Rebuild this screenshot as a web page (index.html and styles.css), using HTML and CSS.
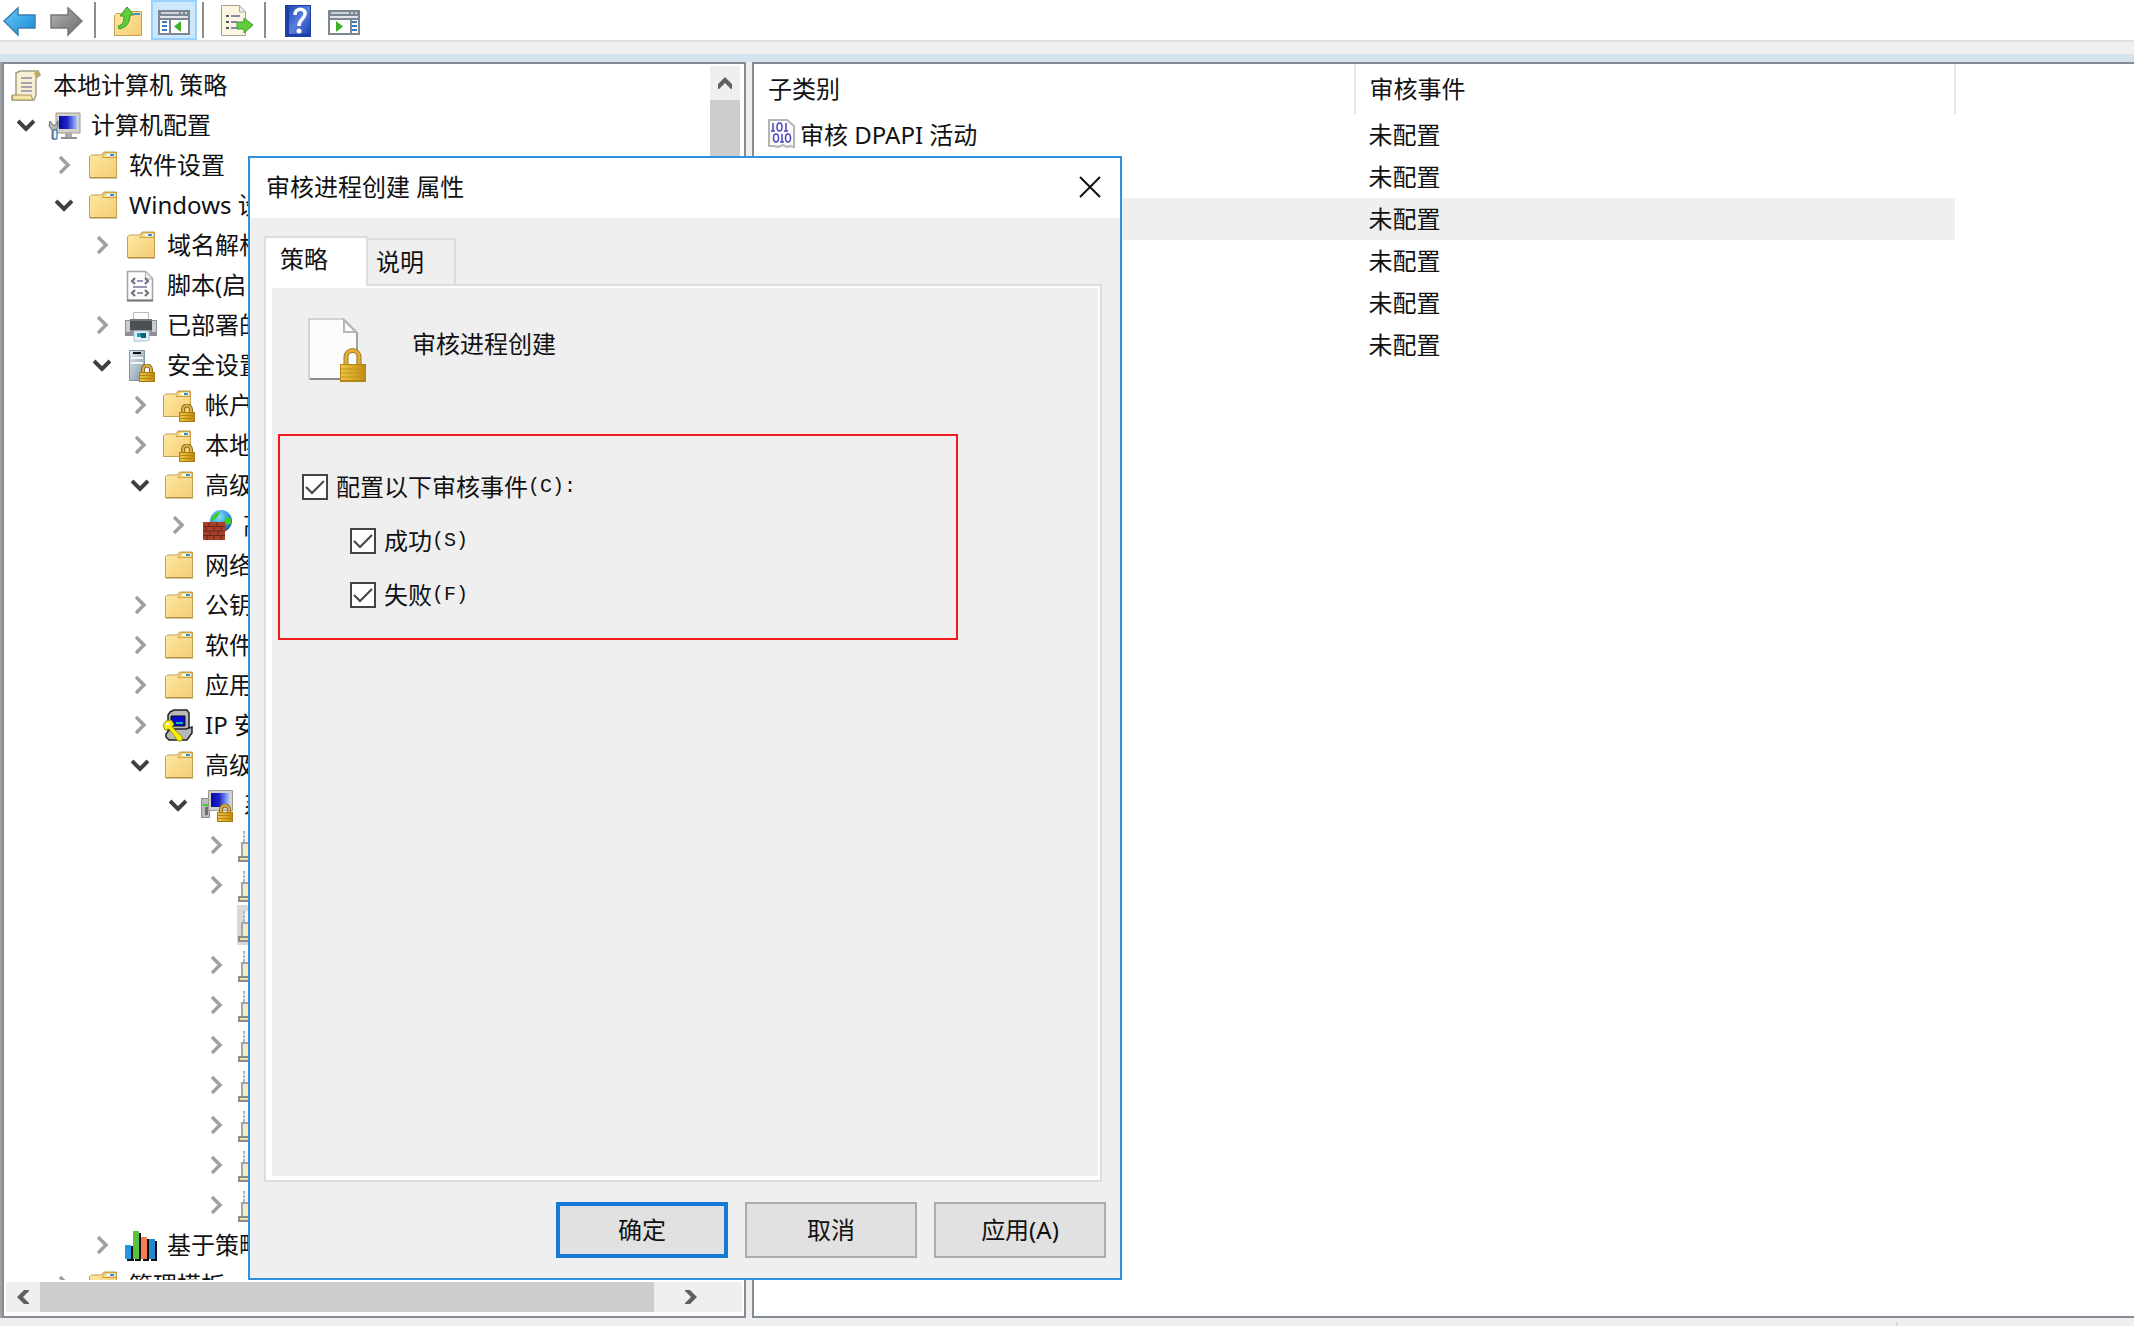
FILE: index.html
```html
<!DOCTYPE html>
<html lang="zh-CN">
<head>
<meta charset="utf-8">
<title>本地计算机 策略</title>
<link rel="stylesheet" href="styles.css">
</head>
<body>
<svg class="defs" aria-hidden="true">
  <defs>
    <linearGradient id="gFolder" x1="0" y1="0" x2="1" y2="1"><stop offset="0" stop-color="#ffeaa6"/><stop offset="1" stop-color="#f3cc72"/></linearGradient>
    <linearGradient id="gBlue" x1="0" y1="0" x2="1" y2="1"><stop offset="0" stop-color="#6ccbf8"/><stop offset="1" stop-color="#1489d6"/></linearGradient>
    <linearGradient id="gGray" x1="0" y1="0" x2="1" y2="1"><stop offset="0" stop-color="#b5b5b5"/><stop offset="1" stop-color="#6a6a6a"/></linearGradient>
    <linearGradient id="gScreen" x1="0" y1="0" x2="1" y2="0"><stop offset="0" stop-color="#0a0aa0"/><stop offset=".45" stop-color="#1c22c8"/><stop offset="1" stop-color="#a8c4ff"/></linearGradient>
    <linearGradient id="gHelp" x1="0" y1="0" x2="1" y2="1"><stop offset="0" stop-color="#2349b8"/><stop offset=".5" stop-color="#5a80e0"/><stop offset="1" stop-color="#1d3fae"/></linearGradient>
    <linearGradient id="gLock" x1="0" y1="0" x2="1" y2="0"><stop offset="0" stop-color="#f0c545"/><stop offset="1" stop-color="#c08d12"/></linearGradient>
    <linearGradient id="gServer" x1="0" y1="0" x2="1" y2="1"><stop offset="0" stop-color="#dfe8ee"/><stop offset="1" stop-color="#7f95a3"/></linearGradient>
    <radialGradient id="gGlobe" cx=".4" cy=".3" r=".8"><stop offset="0" stop-color="#8ce4ff"/><stop offset=".6" stop-color="#2b8fe0"/><stop offset="1" stop-color="#1b3f9a"/></radialGradient>
    <symbol id="right" viewBox="0 0 18 18"><path d="M5 1l8 8-8 8" fill="none" stroke="#a0a0a0" stroke-width="3.500"/></symbol>
    <symbol id="down" viewBox="0 0 18 18"><path d="M1 5l8 8 8-8" fill="none" stroke="#404040" stroke-width="4"/></symbol>
    <symbol id="lock" viewBox="0 0 16 18"><path d="M4 9V5.500a4 4 0 0 1 8 0V9" fill="none" stroke="#8a6a1e" stroke-width="4"/><path d="M4 9V5.500a4 4 0 0 1 8 0V9" fill="none" stroke="#d9b24a" stroke-width="2"/><rect y="8" width="16" height="10" fill="#a87a10"/><rect x="1" y="9" width="14" height="8" fill="url(#gLock)"/><path d="M1 11.500h14M1 14.500h14" stroke="#b5850f"/></symbol>
    <symbol id="folder" viewBox="0 0 34 34"><path d="M4.500 29.500V9l2-2H16l3-3h12.500v25.500z" fill="url(#gFolder)" stroke="#c39f52"/><path d="M17 9.500l3-5h11v5z" fill="#f6dd9b" stroke="#c9a14a"/><rect x="22" y="6" width="8" height="2" fill="#fff"/><rect x="25" y="6" width="4" height="2" fill="#2f8fdd"/><path d="M5 30h27" stroke="#a8823a"/></symbol>
    <symbol id="folderlock" viewBox="0 0 34 34"><path d="M2.500 28.500V8l2-2H14l3-3h12.500v25.500z" fill="url(#gFolder)" stroke="#c39f52"/><path d="M15 8.500l3-5h11v5z" fill="#f6dd9b" stroke="#c9a14a"/><rect x="20" y="5" width="8" height="2" fill="#fff"/><rect x="23" y="5" width="4" height="2" fill="#2f8fdd"/><use href="#lock" x="18" y="16" width="16" height="18"/></symbol>
    <symbol id="scroll" viewBox="0 0 34 34"><path d="M7 5l4-2h18l2 4-4 3v17l-2 5H3v-4l4-1z" fill="#f7f0d3" stroke="#a39c88" stroke-width="1.500"/><path d="M25 5l4-2 2 4-4 3z" fill="#c5a867"/><path d="M3 27h19l2 5H4z" fill="#f5e3a0" stroke="#a39567"/><path d="M12 10h11M12 15h11M12 19h11M12 23h11" stroke="#8d89a5" stroke-width="1.500"/></symbol>
    <symbol id="computer" viewBox="0 0 34 34"><path d="M9 5h24v20H9z" fill="#d3d0c8" stroke="#9c9a94"/><path d="M12 8h18v13H12z" fill="url(#gScreen)"/><path d="M18 25h7v4h-7z" fill="#aaa"/><path d="M14 29h16v2H14z" fill="#8e8e8e"/><path d="M3 13l3 4h3l2-4v6l-2 3v9H5v-9l-3-4z" fill="#b5b8bb" stroke="#707477"/><path d="M6 22h4v9H6z" fill="#e6f2ff" stroke="#23599a"/></symbol>
    <symbol id="script" viewBox="0 0 34 34"><path d="M4.500 3.500h18l7 7v22h-25z" fill="#fbfbfb" stroke="#a5a5a5" stroke-width="1.500"/><path d="M22.500 4v7h7" fill="#eee" stroke="#aaa"/><path d="M4 32.500h26" stroke="#777" stroke-width="2"/><path d="M12 10l-3 3 3 3M22 10l3 3-3 3M12 22l-3 3 3 3M22 22l3 3-3 3" fill="none" stroke="#6b6b78" stroke-width="2"/><path d="M14 13h6M14 25h6M10 19h14" stroke="#9a94b5" stroke-width="2"/></symbol>
    <symbol id="printer" viewBox="0 0 34 34"><path d="M10.500 4.500h15v8h-15z" fill="#fafafa" stroke="#bbb"/><rect x="2" y="12" width="32" height="16" fill="#8d9095"/><rect x="3" y="13" width="4" height="11" fill="#c9ccd0"/><rect x="29" y="13" width="4" height="11" fill="#c9ccd0"/><rect x="7" y="11" width="22" height="11" fill="#4d5053"/><path d="M7 12h22" stroke="#777" stroke-width="2"/><path d="M11 23h15v9l-2 1H11z" fill="#e8f3fb" stroke="#9dc0d8"/><path d="M14 25h4v4h-4z" fill="#18a0b0"/><path d="M18 25h5v5h-5z" fill="#145c78"/></symbol>
    <symbol id="server" viewBox="0 0 34 34"><path d="M6.500 2.500h15v30h-15z" fill="url(#gServer)" stroke="#8397a4"/><path d="M10 5h8" stroke="#111" stroke-width="2"/><path d="M8 10h12M8 15h12" stroke="#f2f6f9" stroke-width="2"/><use href="#lock" x="16" y="16" width="16" height="18"/></symbol>
    <symbol id="firewall" viewBox="0 0 34 34"><circle cx="22" cy="13" r="11" fill="url(#gGlobe)"/><path d="M13 9l4-4 4-1-2 5-3 2-3 3zM27 8l5 3v5l-4 1-3-4z" fill="#3ecb2d"/><path d="M4 14h22v18H4z" fill="#a83f2a"/><path d="M4 18.500h22M4 23h22M4 27.500h22M10 14v4M18 14v4M7 19v4M15 19v4M22 19v4M11 23v4M19 23v4M8 28v4M15 28v4M22 28v4" stroke="#6d2518"/></symbol>
    <symbol id="ipsec" viewBox="0 0 34 34"><path d="M9 4l4-2h13l2 3v16l-4 4H7V7z" fill="#b8b8b8" stroke="#222" stroke-width="1.500"/><path d="M10 8h14v10H10z" fill="#0a0ad0" stroke="#111"/><path d="M15 15h7" stroke="#17b7a4" stroke-width="2"/><path d="M5 26l4-5h16l6-2v6l-5 7H8l-3-3z" fill="#b8b8b8" stroke="#222" stroke-width="1.500"/><path d="M2 17l3-4 5-1 3 4-2 3 11 11-2 3h-3L8 21l-4 1z" fill="#f8f000" stroke="#9c9600"/><path d="M5 16h3" stroke="#fff" stroke-width="2"/></symbol>
    <symbol id="system" viewBox="0 0 34 34"><path d="M2.500 10.500h8v19h-8z" fill="#b9bcbf" stroke="#8b8e91"/><path d="M4 16h6v2H4z" fill="#37d622"/><path d="M6 19h3v8H6z" fill="#6b6e71"/><path d="M9.500 2.500h24v20h-24z" fill="#d3d0c8" stroke="#9c9a94"/><path d="M12 5h18v14H12z" fill="url(#gScreen)"/><use href="#lock" x="18" y="16" width="16" height="18"/></symbol>
    <symbol id="policy" viewBox="0 0 34 34"><path d="M7 3h18v12H7z" fill="#f6f6f6"/><path d="M7 3v12" stroke="#b5b5b5" stroke-width="2" stroke-dasharray="3 1"/><path d="M5 15h22v14H5z" fill="#f9eac0" stroke="#a5a5a5" stroke-width="2"/><path d="M2 29h24v4H2z" fill="#f3dfa4" stroke="#8c8c8c" stroke-width="2"/></symbol>
    <symbol id="chart" viewBox="0 0 34 34"><path d="M8 18h3v15H4v-2zM16 5h2v28h-6v-2h4zM24 11h2v22h-6v-2h4zM31 13h3v20h-6v-2h3z" fill="#111"/><path d="M2 17h6v14H2z" fill="#2596e4"/><path d="M10 3h6v28h-6z" fill="#59c23f"/><path d="M18 9h6v22h-6z" fill="#f67c55"/><path d="M26 11h6v20h-6z" fill="#2088cf"/></symbol>
    <symbol id="back" viewBox="0 0 34 34"><path d="M1 17L15 4v7h17v13H15v7z" fill="url(#gBlue)" stroke="#3b7fae" stroke-width="1.500"/></symbol>
    <symbol id="forward" viewBox="0 0 34 34"><path d="M33 17L19 4v7H2v13h17v7z" fill="url(#gGray)" stroke="#777" stroke-width="1.500"/></symbol>
    <symbol id="up" viewBox="0 0 34 34"><path d="M3.500 31.500V11.500l2-2H17l3-2h10.500v24z" fill="url(#gFolder)" stroke="#c39f52"/><rect x="23" y="9" width="6" height="2" fill="#2f8fdd"/><path d="M7 22c5-1 6-4 6-10H9l7-9 7 8h-4c0 8-4 13-11 14z" fill="#5fce3c" stroke="#35962a"/></symbol>
    <symbol id="treeview" viewBox="0 0 34 34"><path d="M1 6h32v25H1z" fill="#7d8692"/><path d="M3 12h28v2H3z" fill="#dfe4ea"/><path d="M3 16h9v13H3zM14 16h17v13H14z" fill="#fff"/><path d="M4 8h18v2H4zM24 8h2v2h-2zM28 8h2v2h-2z" fill="#c9d4df"/><path d="M5 18h5M5 22h5M5 26h5" stroke="#3a78c0" stroke-width="2"/><path d="M24 17v11l-7-5.500z" fill="#3fae2a"/></symbol>
    <symbol id="paneview" viewBox="0 0 34 34"><path d="M1 6h32v25H1z" fill="#7d8692"/><path d="M3 12h28v2H3z" fill="#dfe4ea"/><path d="M3 16h20v13H3zM25 16h6v13h-6z" fill="#fff"/><path d="M4 8h18v2H4zM24 8h2v2h-2zM28 8h2v2h-2z" fill="#c9d4df"/><path d="M25 18h5M25 22h5M25 26h5" stroke="#3a78c0" stroke-width="2"/><path d="M9 17v11l7-5.500z" fill="#3fae2a"/></symbol>
    <symbol id="export" viewBox="0 0 34 34"><path d="M2.500 1.500h18l6 6v24h-24z" fill="#fbf6e2" stroke="#a5a094"/><path d="M20.500 2v6h6" fill="#eee" stroke="#aaa"/><path d="M7 12h3M7 18h3M7 24h3" stroke="#555" stroke-width="2"/><path d="M12 12h9M12 18h6M12 24h6" stroke="#8b86a8" stroke-width="2"/><path d="M18 18h7v-4l9 7-9 8v-4h-7z" fill="#62cc3f" stroke="#3c9e2c"/></symbol>
    <symbol id="help" viewBox="0 0 34 34"><path d="M4 1h26v32H4z" fill="#1c3fa5"/><path d="M8 2h21v28H8z" fill="url(#gHelp)"/><path d="M14 11c0-8 11-7 10-1 0 5-6 5-6 12" fill="none" stroke="#fff" stroke-width="3.500"/><circle cx="18" cy="27" r="2.500" fill="#fff"/></symbol>
    <symbol id="binary" viewBox="0 0 28 30"><path d="M1 1h18l7 6v21l-4-1-3 1-4-2-5 2-4-1H1z" fill="#fbfbfb" stroke="#b5b5b5" stroke-width="2"/><g fill="none" stroke="#4a44c0" stroke-width="1.500"><path d="M5 4v8M3 12h4M18 4v8M16 12h4M14 15v8M12 23h4"/><ellipse cx="11.500" cy="8" rx="2.500" ry="4"/><ellipse cx="8" cy="19" rx="2.500" ry="4"/><ellipse cx="20" cy="19" rx="2.500" ry="4"/></g></symbol>
    <symbol id="doclock" viewBox="0 0 58 64"><path d="M1 1h34l14 14v46H1z" fill="#fcfcfc" stroke="#d2d2d2" stroke-width="2"/><path d="M35 1l14 14v20" fill="none" stroke="#a3a3a3" stroke-width="2"/><path d="M36 2v12h12z" fill="#fff" stroke="#b5b5b5" stroke-width="2"/><path d="M2 61h32" stroke="#8c8c8c" stroke-width="2"/><path d="M38 46V39a6 6 0 0 1 13 0v7" fill="none" stroke="#9a7a3c" stroke-width="5"/><path d="M38 46V39a6 6 0 0 1 13 0v7" fill="none" stroke="#e3ad2d" stroke-width="3"/><path d="M32 46h26v18H32z" fill="#b38418"/><path d="M33 47h24v15H33z" fill="url(#gLock)"/><path d="M33 51h24M33 55h24M33 59h24" stroke="#c2931c"/></symbol>
  </defs>
</svg>

<div class="toolbar" role="toolbar" aria-label="工具栏">
  <button class="tool" aria-label="后退"><svg><use href="#back"/></svg></button>
  <button class="tool" aria-label="前进"><svg><use href="#forward"/></svg></button>
  <span class="sep"></span>
  <button class="tool" aria-label="上一级"><svg><use href="#up"/></svg></button>
  <button class="tool on" aria-label="显示控制台树" aria-pressed="true"><svg><use href="#treeview"/></svg></button>
  <span class="sep"></span>
  <button class="tool" aria-label="导出列表"><svg><use href="#export"/></svg></button>
  <span class="sep"></span>
  <button class="tool" aria-label="帮助"><svg><use href="#help"/></svg></button>
  <button class="tool" aria-label="操作窗格"><svg><use href="#paneview"/></svg></button>
</div>

<main class="console">
  <section class="panel nav">
    <div class="nav-top">
      <ul class="tree">
        <li class="d0"><svg class="ico"><use href="#scroll"/></svg>本地计算机 策略</li>
        <li class="d1"><i class="tw"><svg><use href="#down"/></svg></i><svg class="ico"><use href="#computer"/></svg>计算机配置</li>
        <li class="d2"><i class="tw"><svg><use href="#right"/></svg></i><svg class="ico"><use href="#folder"/></svg>软件设置</li>
        <li class="d2"><i class="tw"><svg><use href="#down"/></svg></i><svg class="ico"><use href="#folder"/></svg>Windows 设</li>
        <li class="d3"><i class="tw"><svg><use href="#right"/></svg></i><svg class="ico"><use href="#folder"/></svg>域名解析</li>
        <li class="d3"><i class="tw"></i><svg class="ico"><use href="#script"/></svg>脚本(启</li>
        <li class="d3"><i class="tw"><svg><use href="#right"/></svg></i><svg class="ico"><use href="#printer"/></svg>已部署的</li>
        <li class="d3"><i class="tw"><svg><use href="#down"/></svg></i><svg class="ico"><use href="#server"/></svg>安全设置</li>
        <li class="d4"><i class="tw"><svg><use href="#right"/></svg></i><svg class="ico"><use href="#folderlock"/></svg>帐户</li>
        <li class="d4"><i class="tw"><svg><use href="#right"/></svg></i><svg class="ico"><use href="#folderlock"/></svg>本地</li>
        <li class="d4"><i class="tw"><svg><use href="#down"/></svg></i><svg class="ico"><use href="#folder"/></svg>高级</li>
        <li class="d5"><i class="tw"><svg><use href="#right"/></svg></i><svg class="ico"><use href="#firewall"/></svg>高</li>
        <li class="d4"><i class="tw"></i><svg class="ico"><use href="#folder"/></svg>网络</li>
        <li class="d4"><i class="tw"><svg><use href="#right"/></svg></i><svg class="ico"><use href="#folder"/></svg>公钥</li>
        <li class="d4"><i class="tw"><svg><use href="#right"/></svg></i><svg class="ico"><use href="#folder"/></svg>软件</li>
        <li class="d4"><i class="tw"><svg><use href="#right"/></svg></i><svg class="ico"><use href="#folder"/></svg>应用</li>
        <li class="d4"><i class="tw"><svg><use href="#right"/></svg></i><svg class="ico"><use href="#ipsec"/></svg>IP 安</li>
        <li class="d4"><i class="tw"><svg><use href="#down"/></svg></i><svg class="ico"><use href="#folder"/></svg>高级</li>
        <li class="d5"><i class="tw"><svg><use href="#down"/></svg></i><svg class="ico"><use href="#system"/></svg>系</li>
        <li class="d6"><i class="tw"><svg><use href="#right"/></svg></i><svg class="ico"><use href="#policy"/></svg></li>
        <li class="d6"><i class="tw"><svg><use href="#right"/></svg></i><svg class="ico"><use href="#policy"/></svg></li>
        <li class="d6"><i class="tw"></i><span class="sel"><svg class="ico"><use href="#policy"/></svg></span></li>
        <li class="d6"><i class="tw"><svg><use href="#right"/></svg></i><svg class="ico"><use href="#policy"/></svg></li>
        <li class="d6"><i class="tw"><svg><use href="#right"/></svg></i><svg class="ico"><use href="#policy"/></svg></li>
        <li class="d6"><i class="tw"><svg><use href="#right"/></svg></i><svg class="ico"><use href="#policy"/></svg></li>
        <li class="d6"><i class="tw"><svg><use href="#right"/></svg></i><svg class="ico"><use href="#policy"/></svg></li>
        <li class="d6"><i class="tw"><svg><use href="#right"/></svg></i><svg class="ico"><use href="#policy"/></svg></li>
        <li class="d6"><i class="tw"><svg><use href="#right"/></svg></i><svg class="ico"><use href="#policy"/></svg></li>
        <li class="d6"><i class="tw"><svg><use href="#right"/></svg></i><svg class="ico"><use href="#policy"/></svg></li>
        <li class="d3"><i class="tw"><svg><use href="#right"/></svg></i><svg class="ico"><use href="#chart"/></svg>基于策略</li>
        <li class="d2"><i class="tw"><svg><use href="#right"/></svg></i><svg class="ico"><use href="#folder"/></svg>管理模板</li>
      </ul>
      <div class="vbar">
        <button class="arrow" aria-label="向上滚动"><svg viewBox="0 0 16 16"><path d="M1 14V9l7-7 7 7v5h-1L8 8l-6 6z" fill="#606060"/></svg></button>
        <div class="thumb"></div>
      </div>
    </div>
    <div class="hbar">
      <button class="arrow" aria-label="向左滚动"><svg viewBox="0 0 16 16"><path d="M14 1H9L2 8l7 7h5v-1L8 8l6-6z" fill="#606060"/></svg></button>
      <div class="thumb"></div>
      <button class="arrow end" aria-label="向右滚动"><svg viewBox="0 0 16 16"><path d="M2 1h5l7 7-7 7H2v-1l6-6-6-6z" fill="#606060"/></svg></button>
    </div>
  </section>

  <section class="panel list">
    <table>
      <colgroup><col class="c1"><col class="c2"></colgroup>
      <thead><tr><th scope="col">子类别</th><th scope="col">审核事件</th></tr></thead>
      <tbody>
        <tr><td><span class="cell"><svg><use href="#binary"/></svg>审核 DPAPI 活动</span></td><td>未配置</td></tr>
        <tr><td></td><td>未配置</td></tr>
        <tr class="hot"><td></td><td>未配置</td></tr>
        <tr><td></td><td>未配置</td></tr>
        <tr><td></td><td>未配置</td></tr>
        <tr><td></td><td>未配置</td></tr>
      </tbody>
    </table>
  </section>
</main>
<footer class="status"><span></span></footer>

<div class="dialog" role="dialog" aria-labelledby="dlg-title">
  <header class="titlebar">
    <h1 id="dlg-title">审核进程创建 属性</h1>
    <button class="close" aria-label="关闭"><svg viewBox="0 0 22 22"><path d="M1 1l20 20M21 1L1 21" stroke="#111" stroke-width="2"/></svg></button>
  </header>
  <div class="tabs" role="tablist">
    <button class="tab active" role="tab" aria-selected="true">策略</button>
    <button class="tab" role="tab" aria-selected="false">说明</button>
  </div>
  <div class="sheet" role="tabpanel">
    <div class="subject">
      <svg><use href="#doclock"/></svg>
      <h2>审核进程创建</h2>
    </div>
    <div class="options">
      <label><input type="checkbox" checked>配置以下审核事件<span class="key">(C):</span></label>
      <label class="sub"><input type="checkbox" checked>成功<span class="key">(S)</span></label>
      <label class="sub"><input type="checkbox" checked>失败<span class="key">(F)</span></label>
    </div>
  </div>
  <div class="actions">
    <button class="btn primary">确定</button>
    <button class="btn">取消</button>
    <button class="btn">应用(A)</button>
  </div>
</div>
</body>
</html>
```
FILE: styles.css
```css
* { box-sizing: border-box; }

body {
  margin: 0;
  height: 100vh;
  display: flex;
  flex-direction: column;
  overflow: hidden;
  background: #efefef;
  color: #111;
  font: 24px/40px "Noto Sans", "Noto Sans CJK SC", sans-serif;
}

button {
  padding: 0;
  border: 0;
  background: none;
  color: inherit;
  font: inherit;
}

svg { display: block; flex: none; }
.defs { position: absolute; width: 0; height: 0; }

/* Toolbar */
.toolbar {
  display: flex;
  align-items: center;
  flex: none;
  height: 42px;
  padding-left: 3px;
  border-bottom: 2px solid #dedede;
  background: #fff;
}
.tool {
  display: grid;
  place-items: center;
  width: 46px;
  height: 40px;
  padding-top: 2px;
}
.tool svg { width: 34px; height: 34px; }
.tool:first-child { width: 34px; margin-right: 6px; }
.tool.on { background: #cce8ff; border: 2px solid #99d1ff; }
.sep {
  width: 2px;
  height: 36px;
  margin: 0 5px;
  background: #8c8c8c;
}
.sep + .tool { margin-left: 4px; }

/* Console panes */
.console {
  display: flex;
  flex: 1;
  gap: 6px;
  min-height: 0;
  margin-top: 12px;
  padding-left: 2px;
  border-top: 8px solid #d5e3f0;
  box-shadow: inset 2px 0 #a0a0a0;
}
.panel {
  border: 2px solid #858c96;
  background: #fff;
}
.nav {
  display: flex;
  flex-direction: column;
  flex: 0 0 744px;
  min-height: 0;
}
.nav-top { display: flex; flex: 1; min-height: 0; }

.tree {
  flex: 1;
  min-width: 0;
  margin: 0;
  padding: 1px 0 0;
  overflow: hidden;
  list-style: none;
}
.tree li {
  display: flex;
  align-items: center;
  height: 40px;
  white-space: nowrap;
}
.tree .ico { width: 34px; height: 34px; margin-right: 10px; }
.tw { display: grid; place-items: center; flex: none; width: 34px; margin-right: 4px; }
.tw svg { width: 18px; height: 18px; }
.d0 { padding-left: 5px; }
.d1 { padding-left: 5px; }
.d2 { padding-left: 43px; }
.d3 { padding-left: 81px; }
.d4 { padding-left: 119px; }
.d5 { padding-left: 157px; }
.d6 { padding-left: 195px; }
.sel { display: flex; align-items: center; height: 40px; background: #d9d9d9; }

/* Scroll bars */
.vbar {
  display: flex;
  flex-direction: column;
  width: 30px;
  margin: 2px 4px 0 0;
  background: #efefef;
}
.hbar { display: flex; height: 30px; margin: 2px 2px 4px; background: #efefef; }
.arrow { display: grid; place-items: center; flex: none; width: 30px; height: 34px; }
.arrow svg { width: 16px; height: 16px; }
.hbar .arrow { width: 34px; height: 30px; }
.hbar .end { width: 74px; margin-right: 14px; }
.thumb { flex: 1; background: #cdcdcd; }
.vbar .thumb { flex: 0 0 400px; }

/* Result list */
.list { flex: 1; min-width: 0; border-right: 0; }
table { width: 1202px; border-collapse: collapse; table-layout: fixed; }
.c1, .c2 { width: 50%; }
th, td {
  height: 42px;
  padding: 0 14px;
  font-weight: 400;
  line-height: 40px;
  text-align: left;
}
th { height: 50px; border-right: 2px solid #e5e5e5; }
.hot { background: #efefef; }
.cell { display: flex; gap: 4px; }
.cell svg { width: 28px; height: 30px; margin-top: 4px; }

.status { display: flex; flex: none; height: 8px; }
.status span { width: 2px; margin: 4px 236px 0 auto; background: #d9d9d9; }

/* Properties window */
.dialog {
  position: absolute;
  top: 156px;
  left: 248px;
  display: flex;
  flex-direction: column;
  width: 874px;
  height: 1124px;
  border: 2px solid #3390db;
  background: #efefef;
}
.titlebar {
  display: flex;
  align-items: center;
  justify-content: space-between;
  height: 60px;
  padding: 0 18px 3px 16px;
  background: #fff;
}
h1, h2 { margin: 0; font-size: 24px; font-weight: 400; line-height: 40px; }
.close { display: grid; place-items: center; width: 24px; height: 40px; }
.close svg { width: 22px; height: 22px; }

.tabs { display: flex; align-items: flex-end; margin: 18px 14px 0; }
.tab {
  width: 88px;
  height: 46px;
  padding-left: 8px;
  border: 2px solid #dcdcdc;
  border-left: 0;
  border-bottom: 0;
  text-align: left;
}
.tab.active {
  width: 104px;
  height: 50px;
  padding: 0 0 6px 14px;
  border-left: 2px solid #dcdcdc;
  background: #fff;
  z-index: 1;
  margin-bottom: -2px;
}
.sheet {
  flex: 1;
  margin: 0 18px 0 14px;
  padding: 32px 36px;
  border: 2px solid #dcdcdc;
  background: #efefef;
  box-shadow: inset 6px 0 #fff, inset -2px 0 #fff, inset 0 2px #fff, inset 0 -4px #fff;
}
.subject { display: flex; gap: 46px; padding-left: 6px; }
.subject svg { width: 58px; height: 64px; }
.subject h2 { margin-top: 6px; }

.options {
  display: flex;
  flex-direction: column;
  gap: 14px;
  width: 680px;
  height: 206px;
  margin: 52px 0 0 -24px;
  padding: 31px 22px;
  border: 2px solid #f01c1c;
}
.options label { display: flex; align-items: center; }
.options .sub { margin-left: 48px; }
.key { font: 20px/40px "Liberation Mono", monospace; }
input[type="checkbox"] {
  appearance: none;
  width: 26px;
  height: 26px;
  margin: 0 8px 0 0;
  border: 2px solid #444;
  background: #fff;
}
input[type="checkbox"]:checked {
  background: #fff url("data:image/svg+xml,%3Csvg xmlns='http://www.w3.org/2000/svg' viewBox='0 0 22 22'%3E%3Cpath d='M2 11l6 6L20 5' fill='none' stroke='%23444' stroke-width='2'/%3E%3C/svg%3E");
}

.actions {
  display: flex;
  justify-content: flex-end;
  gap: 17px;
  padding: 20px 14px;
}
.btn {
  width: 172px;
  height: 56px;
  border: 2px solid #adadad;
  background: #e1e1e1;
}
.btn.primary { border: 4px solid #1479d7; }
```
